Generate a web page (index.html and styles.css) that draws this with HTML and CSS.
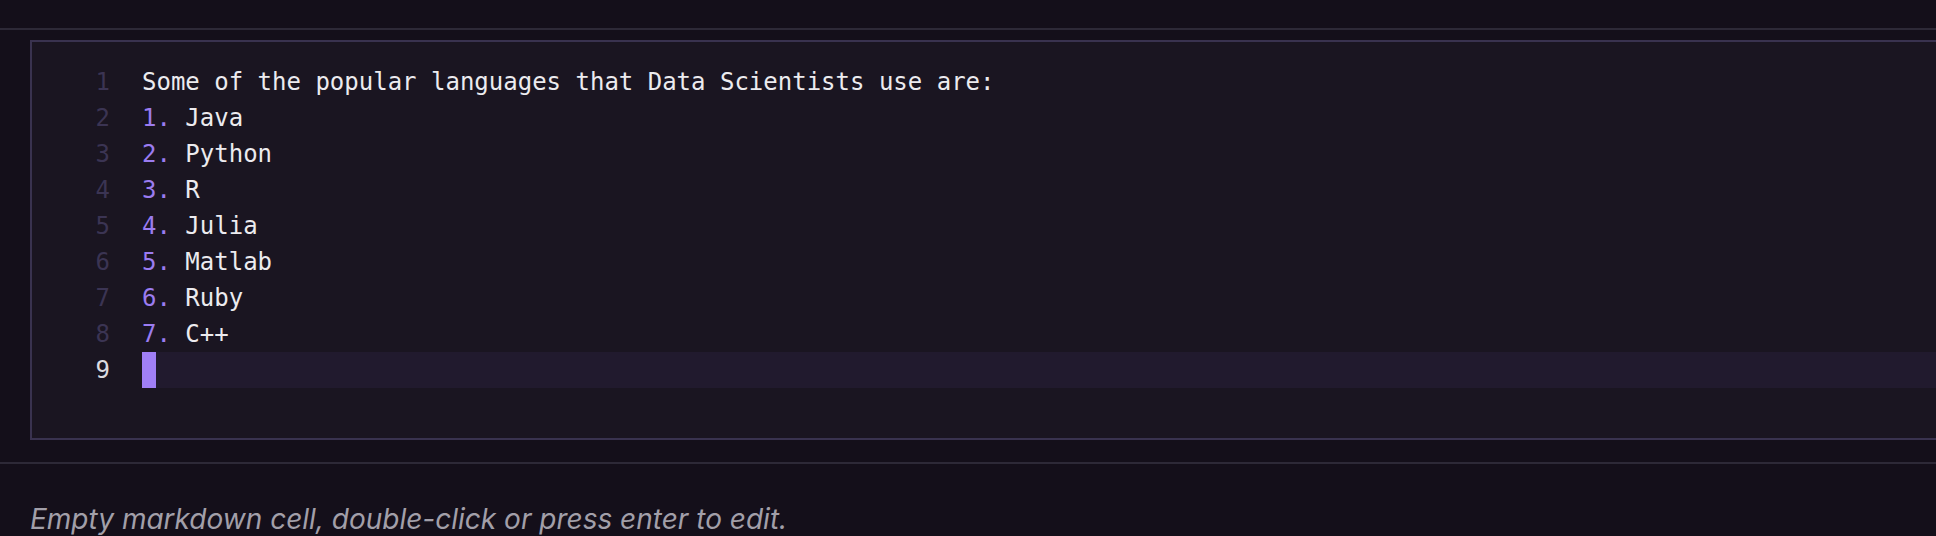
FILE: index.html
```html
<!DOCTYPE html>
<html>
<head>
<meta charset="utf-8">
<link rel="stylesheet" href="styles.css">
</head>
<body>
<div class="topbar"></div>
<div class="cell">
  <div class="editor">
    <div class="line"><span class="ln">1</span><span class="code">Some of the popular languages that Data Scientists use are:</span></div>
    <div class="line"><span class="ln">2</span><span class="code"><span class="num">1.</span> Java</span></div>
    <div class="line"><span class="ln">3</span><span class="code"><span class="num">2.</span> Python</span></div>
    <div class="line"><span class="ln">4</span><span class="code"><span class="num">3.</span> R</span></div>
    <div class="line"><span class="ln">5</span><span class="code"><span class="num">4.</span> Julia</span></div>
    <div class="line"><span class="ln">6</span><span class="code"><span class="num">5.</span> Matlab</span></div>
    <div class="line"><span class="ln">7</span><span class="code"><span class="num">6.</span> Ruby</span></div>
    <div class="line"><span class="ln">8</span><span class="code"><span class="num">7.</span> C++</span></div>
    <div class="line active"><span class="ln">9</span><span class="code"><span class="cursor"></span></span></div>
  </div>
</div>
<div class="divider"></div>
<div class="empty">Empty markdown cell, double-click or press enter to edit.</div>
</body>
</html>
```
FILE: styles.css
```css
html, body {
  margin: 0;
  padding: 0;
  background: #140f1a;
  overflow: hidden;
  height: 536px;
}
.topbar {
  height: 28px;
  border-bottom: 2px solid #2d2937;
}
.cell {
  padding: 10px 0 22px 30px;
}
.editor {
  margin-right: -40px;
  background: #1a1521;
  border: 2px solid #39324f;
  padding: 22px 0 50px 0;
}
.line {
  display: flex;
  height: 36px;
  align-items: center;
  font-family: "DejaVu Sans Mono", monospace;
  font-size: 24px;
  color: #ecebef;
}
.ln {
  width: 78px;
  text-align: right;
  color: #3b3453;
  padding-right: 32px;
  flex: none;
}
.line.active .ln {
  color: #dcdbe0;
}
.code {
  flex: 1;
  white-space: pre;
  display: flex;
  align-items: center;
  height: 36px;
}
.line.active .code {
  background: #211a2e;
}
.num {
  color: #9b7cf0;
}
.cursor {
  display: block;
  width: 14px;
  height: 36px;
  background: #a07ff6;
}
.divider {
  border-top: 2px solid #2d2937;
}
.empty {
  padding: 38px 0 0 30px;
  font-family: "Inter", "Liberation Sans", sans-serif;
  font-style: italic;
  font-size: 28px;
  color: #a29fa9;
  line-height: 34px;
}
```
